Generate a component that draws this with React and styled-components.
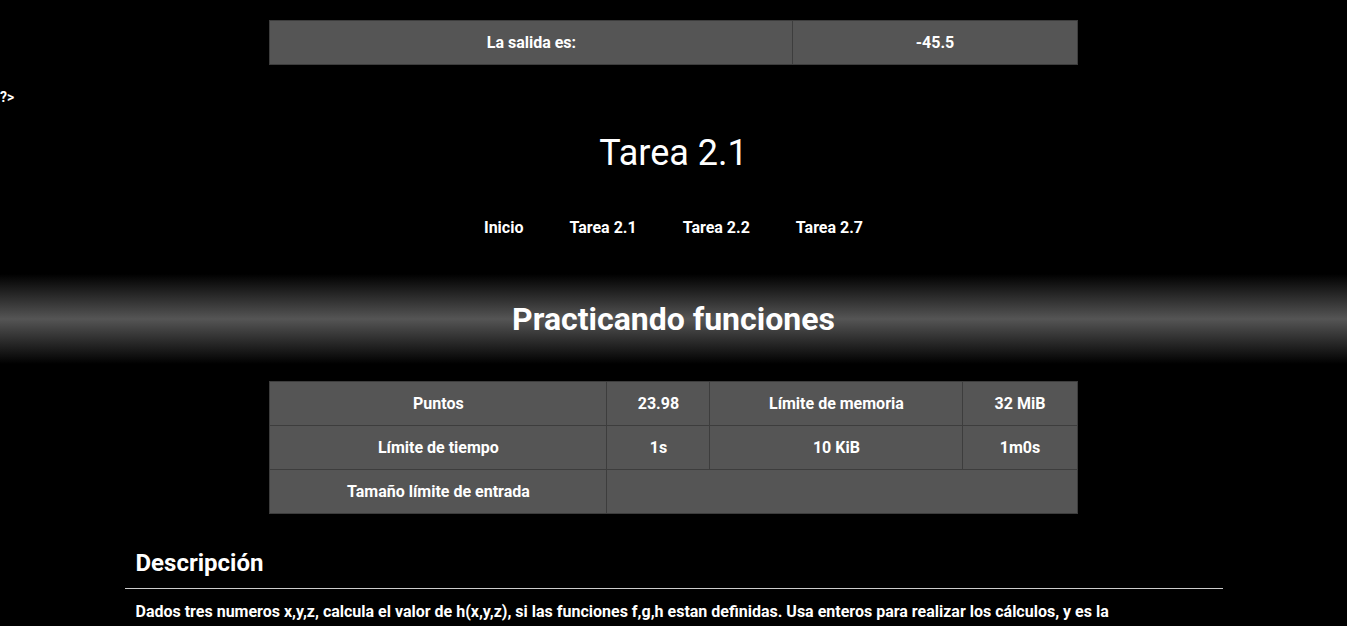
import React from "react";
import styled, { createGlobalStyle } from "styled-components";

const GlobalStyle = createGlobalStyle`
  body {
    margin: 0;
    background-color: #000000;
    color: #ffffff;
    font-family: "Comic Sans MS", "Roboto", sans-serif;
  }
`;

const Page = styled.div`
  display: flex;
  flex-direction: column;
  padding-top: 20px;
`;

const DataTable = styled.table`
  width: 60%;
  margin: 0 auto;
  border-collapse: collapse;
  background-color: #555555;
`;

const Cell = styled.td`
  border: 1px solid #3d3d3d;
  height: 43px;
  padding: 0;
  text-align: center;
  font-size: 16px;
  font-weight: bold;
  width: ${(props) => props.$w || "auto"};
`;

const Stray = styled.div`
  margin-top: 23px;
  font-size: 14px;
  font-weight: bold;
  line-height: 18px;
`;

const Title = styled.h1`
  margin: 25px 0 0;
  text-align: center;
  font-size: 36px;
  font-weight: normal;
  line-height: 44px;
`;

const Nav = styled.nav`
  display: flex;
  justify-content: center;
  gap: 46px;
  margin-top: 43px;
`;

const NavLink = styled.a`
  color: #ffffff;
  text-decoration: none;
  font-size: 16px;
  font-weight: bold;
  line-height: 20px;
`;

const Banner = styled.div`
  margin-top: 36px;
  height: 90px;
  display: flex;
  align-items: center;
  justify-content: center;
  background: linear-gradient(to bottom, #000000 0%, #555555 50%, #000000 100%);
`;

const BannerTitle = styled.h2`
  margin: 0;
  font-size: 32px;
  font-weight: bold;
`;

const InfoWrap = styled.div`
  margin-top: 17px;
`;

const Section = styled.section`
  width: 1098px;
  margin: 34px auto 0;
`;

const SectionTitle = styled.h3`
  margin: 0;
  padding: 0 11px;
  font-size: 24px;
  font-weight: bold;
  line-height: 30px;
  border-bottom: 1px solid #cccccc;
  padding-bottom: 10px;
`;

const Text = styled.p`
  margin: 12px 0 0;
  padding: 0 11px;
  font-size: 16px;
  font-weight: bold;
  line-height: 22px;
`;

export default function App() {
  return (
    <>
      <GlobalStyle />
      <Page>
        <DataTable>
          <tbody>
            <tr>
              <Cell $w="522px">La salida es:</Cell>
              <Cell>-45.5</Cell>
            </tr>
          </tbody>
        </DataTable>
        <Stray>?&gt;</Stray>
        <Title>Tarea 2.1</Title>
        <Nav>
          <NavLink href="#">Inicio</NavLink>
          <NavLink href="#">Tarea 2.1</NavLink>
          <NavLink href="#">Tarea 2.2</NavLink>
          <NavLink href="#">Tarea 2.7</NavLink>
        </Nav>
        <Banner>
          <BannerTitle>Practicando funciones</BannerTitle>
        </Banner>
        <InfoWrap>
          <DataTable>
            <tbody>
              <tr>
                <Cell $w="336px">Puntos</Cell>
                <Cell $w="102px">23.98</Cell>
                <Cell $w="252px">Límite de memoria</Cell>
                <Cell>32 MiB</Cell>
              </tr>
              <tr>
                <Cell>Límite de tiempo</Cell>
                <Cell>1s</Cell>
                <Cell>10 KiB</Cell>
                <Cell>1m0s</Cell>
              </tr>
              <tr>
                <Cell>Tamaño límite de entrada</Cell>
                <Cell colSpan={3}></Cell>
              </tr>
            </tbody>
          </DataTable>
        </InfoWrap>
        <Section>
          <SectionTitle>Descripción</SectionTitle>
          <Text>
            Dados tres numeros x,y,z, calcula el valor de h(x,y,z), si las funciones f,g,h estan definidas. Usa enteros para realizar los cálculos, y es la
          </Text>
        </Section>
      </Page>
    </>
  );
}
